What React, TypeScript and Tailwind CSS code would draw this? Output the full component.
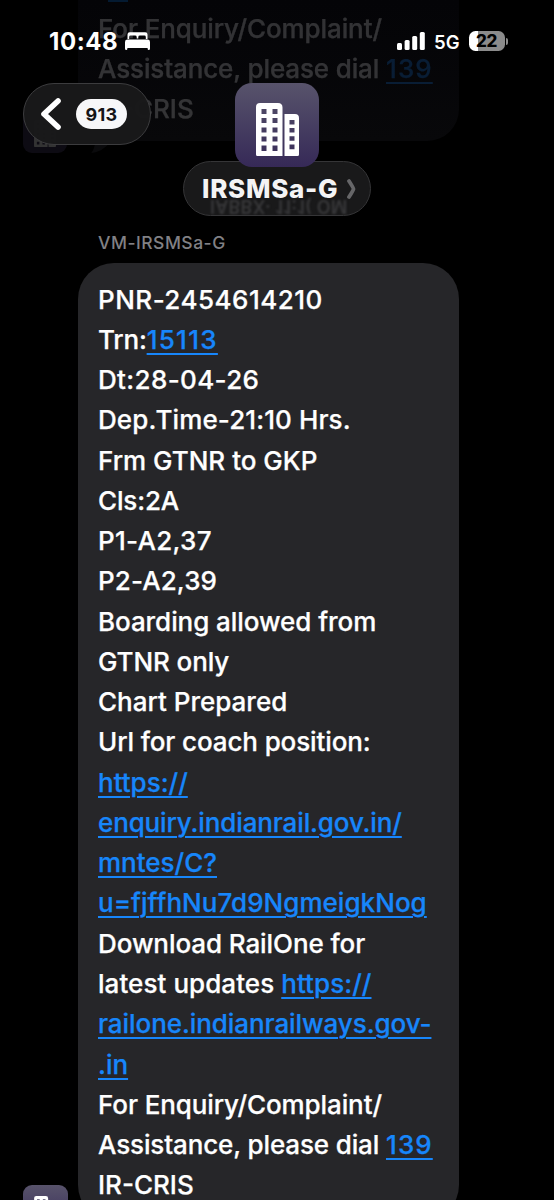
import React from 'react';
import clsx from 'clsx';

const BuildingIcon = ({ className }: { className?: string }) => (
    <svg viewBox="0 0 43 53" className={className} fill="none">
        <path fill="#fff" fillRule="evenodd" d="M4 0H22Q26.500 0 26.500 4.500V53H1.500Q0 53 0 51.500V4Q0 0 4 0ZM5.500 6v5h5V6ZM16.500 6v5h5V6ZM5.500 15v5h5v-5ZM16.500 15v5h5v-5ZM5.500 24.500v5h5v-5ZM16.500 24.500v5h5v-5ZM5.500 33.500v5h5v-5ZM16.500 33.500v5h5v-5ZM5.500 42.500v5.500h5v-5.500ZM16.500 42.500v5.500h5v-5.500Z" />
        <path fill="#fff" fillRule="evenodd" d="M28.500 11H39Q43 11 43 15V51.500Q43 53 41.500 53H28.500ZM33.500 17v4.500h5V17ZM33.500 25v4.500h5V25ZM33.500 33.200v4.500h5v-4.500ZM33.500 41.500v4.800h5v-4.800Z" />
    </svg>
);

const BedIcon = () => (
    <svg viewBox="0 0 25 18" className="h-[18px] w-[25px]" fill="#fff">
        <path d="M2.500 7V2.500Q2.500 .3 4.700 .3H20.300Q22.500 .3 22.500 2.500V7H20.800V5Q20.800 3.600 19.400 3.600H15Q13.300 3.600 13.300 5V6.500H11.700V5Q11.700 3.600 10 3.600H5.600Q4.200 3.600 4.200 5V7Z" />
        <path d="M2.500 7.600H22.500Q25 7.600 25 10V16.500Q25 18 23.800 18T22.600 16.500V15.900H2.400V16.500Q2.400 18 1.200 18T0 16.500V10Q0 7.600 2.500 7.600Z" />
    </svg>
);

const SignalIcon = () => (
    <svg viewBox="0 0 28 18" className="h-[18px] w-[28px]" fill="#fff">
        <rect x="0" y="11" width="5" height="7" rx="1.5" />
        <rect x="7.600" y="8" width="5" height="10" rx="1.5" />
        <rect x="15.200" y="4" width="5" height="14" rx="1.5" />
        <rect x="22.800" y="0" width="5" height="18" rx="1.5" />
    </svg>
);

const Battery = () => (
    <div className="flex items-center gap-px">
        <div className="flex h-5 w-9 items-center justify-center rounded-[6.5px] bg-linear-to-r from-white from-[24%] to-[#8b8b8b] to-[24%] pr-px text-[17px] leading-none font-extrabold text-black">
            <span className="pt-px tracking-[-0.4px]">22</span>
        </div>
        <div className="h-[7px] w-[2px] rounded-r-full bg-[#8b8b8b]" />
    </div>
);

const Link = ({ className, children }: { className?: string; children: React.ReactNode }) => (
    <a href="#" className={clsx('text-[#1786fb] underline decoration-2 underline-offset-[4px]', className)}>{children}</a>
);

const Line = ({ className, children }: { className?: string; children: React.ReactNode }) => (
    <p className={clsx('h-[40.27px] leading-[40.27px] whitespace-nowrap', className)}>{children}</p>
);

const Enquiry = () => (
    <>
        <Line className="tracking-[-0.1px]">For Enquiry/Complaint/</Line>
        <Line className="tracking-[-0.13px]">Assistance, please dial <Link className="tracking-[1.1px]">139</Link></Line>
        <Line>IR-CRIS</Line>
    </>
);

const PreviousMessage = () => (
    <div className="absolute inset-x-0 top-0 h-[160px]">
        <div className="ml-[78px] h-[141px] w-[381px] rounded-b-[32px] bg-linear-to-b from-[#040407] to-[#08080a] pt-[8.5px] pl-[20px] text-[26px] font-medium [-webkit-text-stroke:0.25px]">
            <div className="opacity-18">
                <Enquiry />
            </div>
        </div>
        <div className="absolute top-0 left-[108px] h-[2px] w-[20px] bg-[#041a31]" />
        <div className="absolute top-[110px] left-[23px] flex h-[43px] w-[44px] items-end justify-center rounded-[9px] bg-[#44395f] pb-[6px] opacity-20">
            <BuildingIcon className="h-[27px] w-[22px]" />
        </div>
        <svg viewBox="0 0 20 12" className="absolute top-[141px] left-[91px] h-[12px] w-[20px]" fill="#0a0a0c">
            <path d="M4 0Q4 8 0 12Q12 11 20 0Z" />
        </svg>
    </div>
);

const StatusBar = () => (
    <div className="relative flex h-[83px] justify-between pt-[31px] pr-[46px] pl-[49px]">
        <div className="flex h-5 items-center gap-[7px]">
            <span className="w-[69px] pt-[2px] text-[24px] leading-none font-bold tracking-[0.55px]">10:48</span>
            <BedIcon />
        </div>
        <div className="flex h-5 items-center">
            <SignalIcon />
            <span className="ml-[9px] w-[35px] pt-[2px] text-[18.5px] leading-none font-semibold">5G</span>
            <Battery />
        </div>
    </div>
);

const Header = () => (
    <header className="relative flex h-[133px] items-start">
        <button className="ml-[23px] flex h-[62px] w-[128px] items-center rounded-full border border-[#3c3c3e] bg-[#19191a]/97 pl-[17px]">
            <svg viewBox="0 0 20 32" className="h-8 w-5" fill="none" stroke="#fff" strokeWidth="5.6" strokeLinecap="round" strokeLinejoin="round">
                <path d="M17 3L3 16L17 29" />
            </svg>
            <span className="ml-[15px] flex h-[30px] w-[51px] items-center justify-center rounded-full bg-[#f7f7f9] text-[18px] font-bold tracking-[0.3px] text-[#151517]">913</span>
        </button>
        <div className="ml-[32px] flex w-[188px] flex-col items-center">
            <div className="z-10 flex h-[84px] w-[84px] items-center justify-center rounded-[17px] bg-linear-to-b from-[#58536b] to-[#362957] pt-[9px]">
                <BuildingIcon className="h-[53px] w-[43px]" />
            </div>
            <div className="relative -mt-[6px] flex h-[55px] w-[188px] items-center overflow-hidden rounded-full border border-[#353537] bg-[#19191a] pl-[18px]">
                <span aria-hidden="true" className="absolute top-[35px] left-[26px] w-[138px] -scale-y-100 text-[18px] leading-[18px] font-semibold tracking-[0.2px] whitespace-nowrap text-[#38383a] blur-[0.8px]">IABBX· 11:1( OM</span>
                <span className="relative w-[145px] text-[26px] font-extrabold tracking-[0.7px] text-[#f4f4f5]">IRSMSa-G</span>
                <svg viewBox="0 0 9 20" className="relative h-5 w-[9px]" fill="none" stroke="#666668" strokeWidth="3.8" strokeLinecap="round" strokeLinejoin="round">
                    <path d="M2 2Q6.500 9 6.500 10Q6.500 11 2 18" />
                </svg>
            </div>
        </div>
    </header>
);

const Message = () => (
    <section>
        <p className="mt-[15px] ml-[98px] h-[32px] text-[17.5px] leading-[23px] font-medium tracking-[0.5px] text-[#818185]">VM-IRSMSa-G</p>
        <div className="flex">
            <div className="mt-[922px] ml-[23px] flex h-[45px] w-[45px] shrink-0 justify-center rounded-[9px] bg-linear-to-b from-[#58536b] to-[#362957] pt-[11px]">
                <BuildingIcon className="h-[28px] w-[23px]" />
            </div>
            <div className="ml-[10px] h-[958px] w-[381px] rounded-[36px] bg-[#262629] pt-[16.5px] pl-[20px] text-[26px] font-medium [-webkit-text-stroke:0.25px]">
                <Line className="tracking-[0.48px]">PNR-2454614210</Line>
                <Line className="tracking-[-0.2px]">Trn:<Link className="tracking-[1.3px]">15113</Link></Line>
                <Line className="tracking-[0.35px]">Dt:28-04-26</Line>
                <Line className="tracking-[0.1px]">Dep.Time-21:10 Hrs.</Line>
                <Line>Frm GTNR to GKP</Line>
                <Line className="tracking-[-0.15px]">Cls:2A</Line>
                <Line className="tracking-[0.3px]">P1-A2,37</Line>
                <Line className="tracking-[0.1px]">P2-A2,39</Line>
                <Line className="tracking-[-0.06px]">Boarding allowed from</Line>
                <Line className="tracking-[-0.1px]">GTNR only</Line>
                <Line>Chart Prepared</Line>
                <Line className="tracking-[-0.12px]">Url for coach position:</Line>
                <Line><Link>https://</Link></Line>
                <Line className="tracking-[-0.13px]"><Link>enquiry.indianrail.gov.in/</Link></Line>
                <Line><Link>mntes/C?</Link></Line>
                <Line className="tracking-[0.04px]"><Link>u=fjffhNu7d9NgmeigkNog</Link></Line>
                <Line className="tracking-[-0.08px]">Download RailOne for</Line>
                <Line className="tracking-[0.06px]">latest updates <Link>https://</Link></Line>
                <Line className="tracking-[-0.07px]"><Link>railone.indianrailways.gov-</Link></Line>
                <Line><Link>.in</Link></Line>
                <Enquiry />
            </div>
        </div>
    </section>
);

const App: React.FC = () => {
    return (
        <div className="relative h-[1200px] w-[554px] overflow-hidden bg-black font-['Inter',sans-serif] text-white">
            <PreviousMessage />
            <StatusBar />
            <Header />
            <Message />
        </div>
    );
};

export default App;
